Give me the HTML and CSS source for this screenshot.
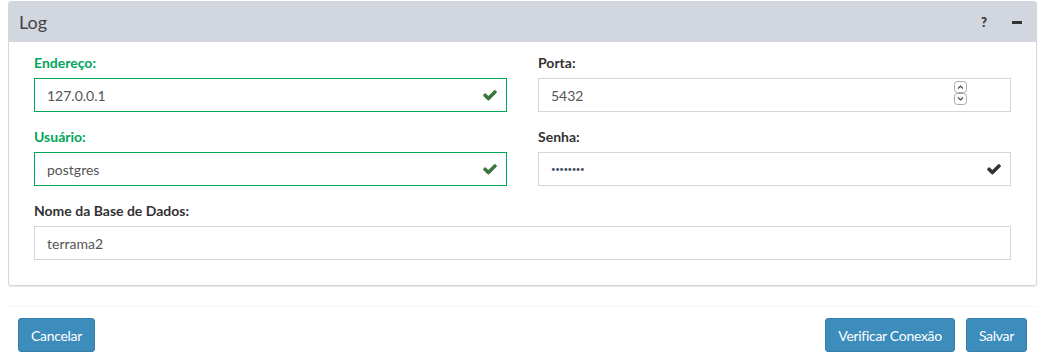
FILE: index.html
```html
<!DOCTYPE html>
<html lang="pt-BR">
<head>
  <meta charset="UTF-8">
  <title>Log</title>
  <link rel="stylesheet" href="styles.css">
</head>
<body>

  <div class="pagina">
    <div class="caixa">
      <div class="caixa-topo">
        <h3 class="caixa-titulo">Log</h3>
        <div class="caixa-ferramentas">
          <span class="ajuda">?</span>
          <span class="minimizar"></span>
        </div>
      </div>

      <div class="caixa-corpo">
        <div class="campo ok">
          <label>Endereço:</label>
          <div class="entrada">
            <input type="text" value="127.0.0.1">
            <svg class="marca verde" viewBox="0 0 1792 1792"><path d="M1671 566q0 40-28 68l-724 724-136 136q-28 28-68 28t-68-28l-136-136-362-362q-28-28-28-68t28-68l136-136q28-28 68-28t68 28l294 295 656-657q28-28 68-28t68 28l136 136q28 28 28 68z"/></svg>
          </div>
        </div>

        <div class="campo">
          <label>Porta:</label>
          <div class="entrada">
            <input type="text" value="5432">
            <!-- setas do campo numerico -->
            <svg class="setas" viewBox="0 0 14 25">
              <rect x="0.5" y="0.5" width="12" height="11" rx="3" fill="#fff" stroke="#a9a9a9"/>
              <path d="M4 7.5 L6.5 5 L9 7.5" fill="none" stroke="#444" stroke-width="1.1"/>
              <rect x="0.5" y="12.5" width="12" height="11" rx="3" fill="#fff" stroke="#a9a9a9"/>
              <path d="M4 16.5 L6.5 19 L9 16.5" fill="none" stroke="#444" stroke-width="1.1"/>
            </svg>
          </div>
        </div>

        <div class="campo ok">
          <label>Usuário:</label>
          <div class="entrada">
            <input type="text" value="postgres">
            <svg class="marca verde" viewBox="0 0 1792 1792"><path d="M1671 566q0 40-28 68l-724 724-136 136q-28 28-68 28t-68-28l-136-136-362-362q-28-28-28-68t28-68l136-136q28-28 68-28t68 28l294 295 656-657q28-28 68-28t68 28l136 136q28 28 28 68z"/></svg>
          </div>
        </div>

        <div class="campo">
          <label>Senha:</label>
          <div class="entrada">
            <input type="password" class="senha" value="postgres">
            <svg class="marca escura" viewBox="0 0 1792 1792"><path d="M1671 566q0 40-28 68l-724 724-136 136q-28 28-68 28t-68-28l-136-136-362-362q-28-28-28-68t28-68l136-136q28-28 68-28t68 28l294 295 656-657q28-28 68-28t68 28l136 136q28 28 28 68z"/></svg>
          </div>
        </div>

        <div class="campo inteiro">
          <label>Nome da Base de Dados:</label>
          <div class="entrada">
            <input type="text" value="terrama2">
          </div>
        </div>
      </div>
    </div>

    <div class="rodape">
      <button class="botao">Cancelar</button>
      <div class="acoes">
        <button class="botao">Verificar Conexão</button>
        <button class="botao">Salvar</button>
      </div>
    </div>
  </div>

</body>
</html>
```

FILE: styles.css
```css
body {
  margin: 0;
  padding: 0;
  background: #fff;
  font-family: Lato, "Open Sans", sans-serif;
  font-size: 14px;
  color: #333;
}

.pagina {
  padding: 1px 8px 0;
}

.caixa {
  background: #fff;
  border: 1px solid #d2d6de;
  border-radius: 3px;
  box-shadow: 0 1px 1px rgba(0, 0, 0, 0.1);
}

.caixa-topo {
  display: flex;
  align-items: center;
  justify-content: space-between;
  height: 40px;
  padding: 0 10px;
  background: #d2d6de;
  color: #444;
}

.caixa-titulo {
  margin: 0;
  font-size: 18px;
  font-weight: normal;
}

.caixa-ferramentas {
  display: flex;
  align-items: center;
  gap: 25px;
  padding-right: 4px;
}

.ajuda {
  font-size: 13px;
  font-weight: 900;
  color: #333;
}

.minimizar {
  width: 10px;
  height: 3px;
  background: #333;
}

.caixa-corpo {
  display: grid;
  grid-template-columns: 1fr 1fr;
  column-gap: 31px;
  row-gap: 15px;
  padding: 11px 25px 25px;
}

.campo.inteiro {
  grid-column: 1 / 3;
}

.campo label {
  display: block;
  margin-bottom: 5px;
  line-height: 20px;
  font-weight: bold;
  color: #333;
}

.campo.ok label {
  color: #00a65a;
}

.entrada {
  position: relative;
}

.entrada input {
  display: block;
  box-sizing: border-box;
  width: 100%;
  height: 34px;
  padding: 6px 12px;
  border: 1px solid #d2d6de;
  border-radius: 0;
  font-family: inherit;
  font-size: 14px;
  color: #555;
  outline: none;
}

.entrada input.senha {
  font-size: 8px;
  letter-spacing: -0.5px;
  color: #4a5266;
}

.campo.ok input {
  border-color: #00a65a;
}

.marca {
  position: absolute;
  right: 9px;
  top: 9px;
  width: 16px;
  height: 16px;
}

.marca.verde {
  fill: #3c763d;
}

.marca.escura {
  fill: #333;
}

.setas {
  position: absolute;
  right: 43px;
  top: 3px;
  width: 14px;
  height: 25px;
}

.rodape {
  display: flex;
  justify-content: space-between;
  margin-top: 20px;
  padding: 11px 10px;
  border-top: 1px solid #f4f4f4;
}

.acoes {
  display: flex;
  gap: 11px;
}

.botao {
  height: 34px;
  padding: 6px 12px;
  background: #3c8dbc;
  border: 1px solid #367fa9;
  border-radius: 3px;
  font-family: inherit;
  font-size: 14px;
  letter-spacing: -0.3px;
  color: #fff;
  cursor: pointer;
}
```
